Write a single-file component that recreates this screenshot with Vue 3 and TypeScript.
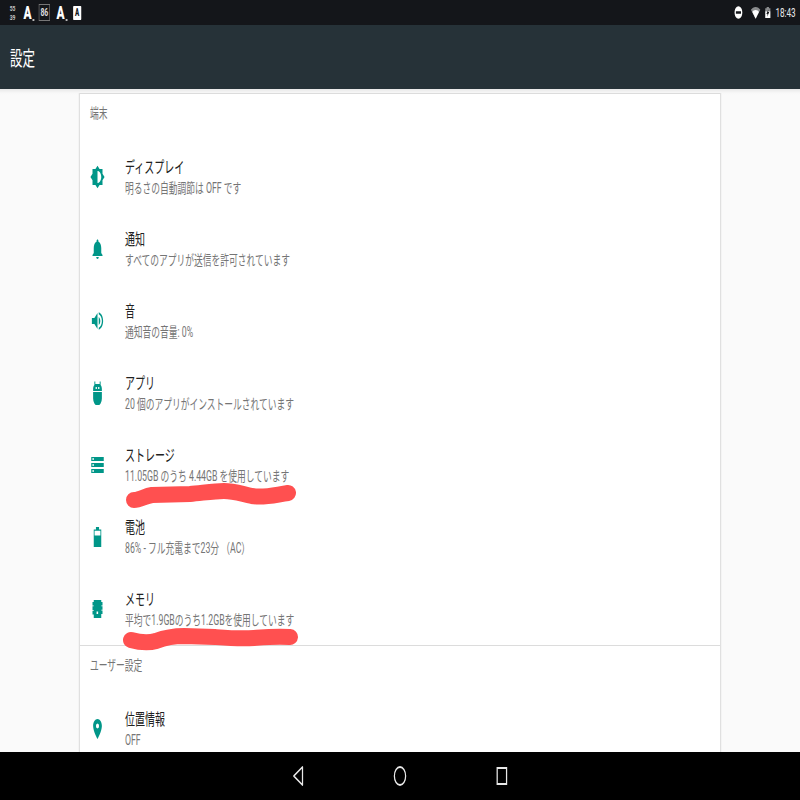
<script setup lang="ts">
interface Item {
  title: string
  sub: string
  icon: string
}

const device: Item[] = [
  { title: 'ディスプレイ', sub: '明るさの自動調節は OFF です', icon: 'M20 15.31L23.31 12 20 8.69V4h-4.69L12 .69 8.69 4H4v4.69L.69 12 4 15.31V20h4.69L12 23.31 15.31 20H20v-4.69zM12 18V6c3.31 0 6 2.69 6 6s-2.69 6-6 6z' },
  { title: '通知', sub: 'すべてのアプリが送信を許可されています', icon: 'M12 22c1.1 0 2-.9 2-2h-4c0 1.1.9 2 2 2zm6-6v-5c0-3.07-1.63-5.64-4.5-6.32V4c0-.83-.67-1.5-1.5-1.5s-1.5.67-1.5 1.5v.68C7.64 5.36 6 7.92 6 11v5l-2 2v1h16v-1l-2-2z' },
  { title: '音', sub: '通知音の音量: 0%', icon: 'M3 9v6h4l5 5V4L7 9H3zm13.5 3c0-1.77-1.02-3.29-2.5-4.03v8.05c1.48-.73 2.5-2.25 2.5-4.02zM14 3.23v2.06c2.89.86 5 3.54 5 6.71s-2.11 5.85-5 6.71v2.06c4.01-.91 7-4.49 7-8.77s-2.99-7.86-7-8.77z' },
  { title: 'アプリ', sub: '20 個のアプリがインストールされています', icon: 'M7 0.500h1.500V3h7V0.500H17V4c1.300 1 2 2.500 2 4v2H5V8c0-1.500.700-3 2-4zM9 6v2h2V6zm4 0v2h2V6zM5 11h14v6.500a7 7 0 0 1-14 0z' },
  { title: 'ストレージ', sub: '11.05GB のうち 4.44GB を使用しています', icon: 'M2 20h20v-4H2v4zm2-3h2v2H4v-2zM2 4v4h20V4H2zm4 3H4V5h2v2zm-4 7h20v-4H2v4zm2-3h2v2H4v-2z' },
  { title: '電池', sub: '86% - フル充電まで23分 （AC）', icon: 'M9.500 2h5v2.500H18V22H6V4.500h3.500zM7.300 5.800V10.500h9.400V5.800z' },
  { title: 'メモリ', sub: '平均で1.9GBのうち1.2GBを使用しています', icon: 'M6 3h12v2h2v3.500h-2v.7h2v3.600h-2v.7h2v3.500h-2V21H6v-3.500H4v-3.500h2v-.7H4V9.200h2v-.7H4V5h2zM10.500 14.500v2.500h2.500v-2.500z' },
]

const personal: Item[] = [
  { title: '位置情報', sub: 'OFF', icon: 'M12 2C8.130 2 5 5.130 5 9c0 5.250 7 13 7 13s7-7.750 7-13c0-3.870-3.130-7-7-7zm0 9.500a2.500 2.500 0 0 1 0-5 2.500 2.500 0 0 1 0 5z' },
]

const sections = [
  { name: '端末', items: device },
  { name: 'ユーザー設定', items: personal },
]
</script>

<template>
  <div class="screen">
    <div class="stage">
      <div class="status">
        <div class="status-left">
          <span class="tiny">55<br />39</span>
          <span class="glyph">A</span>
          <span class="boxed">86</span>
          <span class="glyph">A</span>
          <span class="card-glyph">A</span>
        </div>
        <div class="status-right">
          <svg class="st-dnd" viewBox="0 0 24 24"><path fill="#fff" d="M12 2a10 10 0 1 0 0 20 10 10 0 0 0 0-20zM5.500 10h13v4h-13z" fill-rule="evenodd" /></svg>
          <svg class="st-wifi" viewBox="0 0 24 24"><path fill="#8a8c8e" d="M12 3C7 3 3 4.800 0 7.500L12 22 24 7.500C21 4.800 17 3 12 3z" /><path fill="#fff" d="M12 8c-3.400 0-6.400 1.100-8.400 3L12 22l8.400-11C18.400 9.100 15.400 8 12 8z" /></svg>
          <svg class="st-batt" viewBox="0 0 24 24"><path fill="#8a8c8e" d="M8 0h8v2.500h5V9H3V2.500h5z" /><path fill="#fff" d="M3 9h18v15H3z" /><path fill="#14161a" d="M14 5L7 15h4l-1 6 7-10h-4z" /></svg>
          <span class="time">18:43</span>
        </div>
      </div>

      <header class="appbar">設定</header>

      <main class="content">
        <div class="card">
          <section v-for="s in sections" :key="s.name" class="section">
            <div class="sec-name">{{ s.name }}</div>
            <div v-for="it in s.items" :key="it.title" class="row">
              <svg class="icon" viewBox="0 0 24 24"><path :d="it.icon" fill="#009688" fill-rule="evenodd" /></svg>
              <div class="texts">
                <div class="title">{{ it.title }}</div>
                <div class="sub">{{ it.sub }}</div>
              </div>
            </div>
          </section>
        </div>
      </main>

      <nav class="navbar">
        <svg class="nav-ico" viewBox="0 0 24 24"><path d="M19 3V21L5 12z" fill="none" stroke="#e8e8e8" stroke-width="2" stroke-linejoin="round" /></svg>
        <svg class="nav-ico" viewBox="0 0 24 24"><circle cx="12" cy="12" r="9" fill="none" stroke="#e8e8e8" stroke-width="2" /></svg>
        <svg class="nav-ico" viewBox="0 0 24 24"><rect x="4.500" y="4" width="15" height="16" fill="none" stroke="#e8e8e8" stroke-width="2" /></svg>
      </nav>
    </div>

    <!-- red marker scribbles, sit over the list -->
    <svg class="scribble" viewBox="0 0 800 800">
      <path d="M134 500C140 500 145 496 152 495L190 494C202 493 214 491 224 491C234 491 242 494 252 496C264 498 274 495 288 493" />
      <path d="M131 640C138 642 146 644 156 641C164 638 172 636 184 636L215 637C228 638 240 639 254 638C266 637 276 636 290 637" />
    </svg>
  </div>
</template>

<style scoped>
.screen {
  position: relative;
  width: 800px;
  height: 800px;
  overflow: hidden;
  background: #fafafa;
}
/* the device is 1280 wide and the shot squeezes it to 800 */
.stage {
  width: 1280px;
  height: 800px;
  display: flex;
  flex-direction: column;
  transform: scaleX(0.625);
  transform-origin: left top;
  font-family: Roboto, "Noto Sans CJK JP", sans-serif;
}
.status {
  flex: 0 0 25px;
  background: #14161a;
  color: #fff;
  display: flex;
  align-items: center;
  justify-content: space-between;
  padding: 0 7px 0 13px;
}
.status-left,
.status-right {
  display: flex;
  align-items: center;
}
.tiny {
  width: 14px;
  font-size: 8px;
  line-height: 9px;
  font-weight: 700;
  text-align: center;
  color: #c4c4c4;
  margin-right: 10px;
}
.glyph {
  position: relative;
  width: 14px;
  font-size: 19px;
  line-height: 22px;
  font-weight: 900;
  text-align: center;
  margin-right: 11px;
}
/* small tick at the foot of the A */
.glyph::after {
  content: "";
  position: absolute;
  right: -4px;
  bottom: 3px;
  width: 3px;
  height: 2px;
  background: #bbb;
}
.boxed {
  width: 18px;
  height: 17px;
  box-sizing: border-box;
  border: 1px solid #777;
  font-size: 11px;
  line-height: 15px;
  font-weight: 700;
  text-align: center;
  color: #ddd;
  margin-right: 10px;
}
.card-glyph {
  width: 13px;
  height: 14px;
  margin-left: 2px;
  background: #fff;
  color: #14161a;
  font-size: 10px;
  line-height: 14px;
  font-weight: 900;
  text-align: center;
  border-radius: 1px;
}
.st-dnd {
  width: 15px;
  height: 15px;
  margin-right: 11px;
}
.st-wifi {
  width: 18px;
  height: 15px;
  margin-right: 5px;
}
.st-batt {
  width: 11px;
  height: 15px;
  margin-right: 7px;
}
.time {
  font-size: 13px;
  color: #e8e8e8;
}
.appbar {
  flex: 0 0 64px;
  box-sizing: border-box;
  display: flex;
  align-items: center;
  background: #263238;
  color: #fff;
  font-size: 20px;
  padding-left: 16px;
}
.content {
  flex: 1;
  min-height: 0;
  overflow: hidden;
  display: flex;
  justify-content: center;
  padding-top: 4px;
  background: linear-gradient(#e8e8e8, #f8f8f8 4px, #fafafa 6px);
}
.card {
  width: 1024px;
  background: #fff;
  border-left: 2px solid #e0e0e0;
  border-right: 2px solid #e0e0e0;
}
.section {
  border-top: 1px solid #dcdcdc;
}
.sec-name {
  height: 47px;
  padding-left: 16px;
  font-size: 14px;
  line-height: 38px;
  color: #757575;
}
.row {
  height: 72px;
  display: flex;
  align-items: center;
  padding-left: 16px;
}
.icon {
  width: 24px;
  height: 24px;
  margin-right: 32px;
}
.title {
  padding-top: 2px;
  font-size: 16px;
  line-height: 20px;
  color: #212121;
}
.sub {
  font-size: 14px;
  line-height: 20px;
  color: #757575;
}
.navbar {
  flex: 0 0 48px;
  background: #000;
  display: flex;
  align-items: center;
  justify-content: center;
  gap: 139px;
}
.nav-ico {
  width: 24px;
  height: 24px;
}
.scribble {
  position: absolute;
  left: 0;
  top: 0;
  width: 800px;
  height: 800px;
  pointer-events: none;
}
.scribble path {
  fill: none;
  stroke: #ff5050;
  stroke-width: 16;
  stroke-linecap: round;
  stroke-linejoin: round;
}
</style>
